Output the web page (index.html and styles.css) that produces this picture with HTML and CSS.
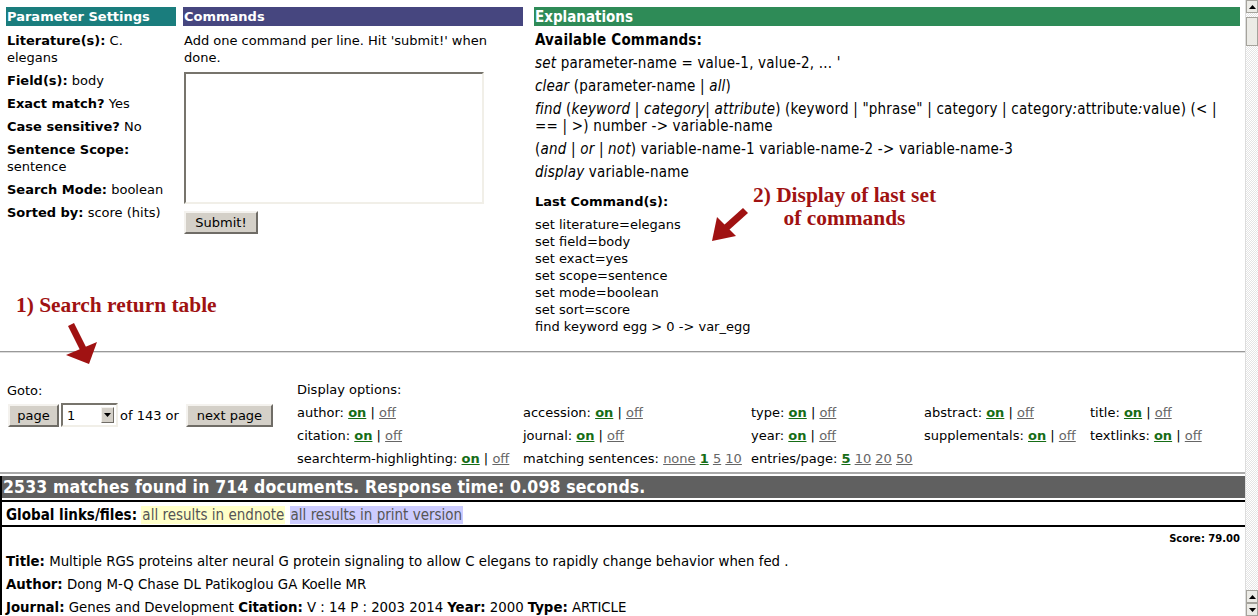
FILE: index.html
```html
<!DOCTYPE html>
<html>
<head>
<meta charset="utf-8">
<link rel="stylesheet" href="styles.css">
</head>
<body>
<div class="page">
  <div class="top">
    <div class="params">
      <div class="hdr teal">Parameter Settings</div>
      <p><b>Literature(s):</b> C. elegans</p>
      <p><b>Field(s):</b> body</p>
      <p><b>Exact match?</b> Yes</p>
      <p><b>Case sensitive?</b> No</p>
      <p><b>Sentence Scope:</b> sentence</p>
      <p><b>Search Mode:</b> boolean</p>
      <p><b>Sorted by:</b> score (hits)</p>
    </div>
    <div class="cmds">
      <div class="hdr slate">Commands</div>
      <p>Add one command per line. Hit 'submit!' when done.</p>
      <textarea class="cmdbox"></textarea>
      <div class="btnrow"><button class="btn submit">Submit!</button></div>
    </div>
    <div class="expl">
      <div class="hdr green cond">Explanations</div>
      <p class="cond"><b>Available Commands:</b></p>
      <p class="cond"><i>set</i> parameter-name = value-1, value-2, ... '</p>
      <p class="cond"><i>clear</i> (parameter-name | <i>all</i>)</p>
      <p class="cond"><i>find</i> (<i>keyword</i> | <i>category</i>| <i>attribute</i>) (keyword | "phrase" | category | category<i>:</i>attribute<i>:</i>value) (&lt; |<br>== | &gt;) number -&gt; variable-name</p>
      <p class="cond">(<i>and</i> | <i>or</i> | <i>not</i>) variable-name-1 variable-name-2 -&gt; variable-name-3</p>
      <p class="cond"><i>display</i> variable-name</p>
      <p class="lasthdr"><b>Last Command(s):</b></p>
      <p class="lastcmds">set literature=elegans<br>set field=body<br>set exact=yes<br>set scope=sentence<br>set mode=boolean<br>set sort=score<br>find keyword egg &gt; 0 -&gt; var_egg</p>
    </div>
  </div>

  <hr class="rule">

  <div class="nav">
    <div class="goto">
      <div class="gotolabel">Goto:</div>
      <div class="gotorow">
        <button class="btn pagebtn">page</button>
        <div class="select"><span class="selval">1</span><span class="selarrow"><svg width="7" height="4" viewBox="0 0 7 4"><path d="M0 0h7L3.5 4z" fill="#000"/></svg></span></div>
        <span class="of">of 143 or</span>
        <button class="btn nextbtn">next page</button>
      </div>
    </div>
    <div class="opts">
      <div class="full">Display options:</div>
      <div>author: <a class="on">on</a> | <a class="off">off</a></div>
      <div>accession: <a class="on">on</a> | <a class="off">off</a></div>
      <div>type: <a class="on">on</a> | <a class="off">off</a></div>
      <div>abstract: <a class="on">on</a> | <a class="off">off</a></div>
      <div>title: <a class="on">on</a> | <a class="off">off</a></div>
      <div>citation: <a class="on">on</a> | <a class="off">off</a></div>
      <div>journal: <a class="on">on</a> | <a class="off">off</a></div>
      <div>year: <a class="on">on</a> | <a class="off">off</a></div>
      <div>supplementals: <a class="on">on</a> | <a class="off">off</a></div>
      <div>textlinks: <a class="on">on</a> | <a class="off">off</a></div>
      <div>searchterm-highlighting: <a class="on">on</a> | <a class="off">off</a></div>
      <div>matching sentences: <a class="off">none</a> <a class="on">1</a> <a class="off">5</a> <a class="off">10</a></div>
      <div class="span3">entries/page: <a class="on">5</a> <a class="off">10</a> <a class="off">20</a> <a class="off">50</a></div>
    </div>
  </div>

  <div class="results">
    <div class="matches cond">2533 matches found in 714 documents. Response time: 0.098 seconds.</div>
    <div class="global cond"><b>Global links/files:</b> <span class="endnote">all results in endnote</span> <span class="printv">all results in print version</span></div>
    <div class="entry">
      <div class="score">Score: 79.00</div>
      <p class="cond"><b>Title:</b> Multiple RGS proteins alter neural G protein signaling to allow C elegans to rapidly change behavior when fed .</p>
      <p class="cond"><b>Author:</b> Dong M-Q Chase DL Patikoglou GA Koelle MR</p>
      <p class="cond"><b>Journal:</b> Genes and Development <b>Citation:</b> V : 14 P : 2003 2014 <b>Year:</b> 2000 <b>Type:</b> ARTICLE</p>
    </div>
  </div>

  <div class="annot a1">1) Search return table</div>
  <div class="annot a2">2) Display of last set<br>of commands</div>
  <svg class="arrows" width="1246" height="616" viewBox="0 0 1246 616">
    <g fill="#a01212" stroke="none">
      <path d="M68 326 L74 323 L87 349 L81 352 Z"/>
      <path d="M66 355 L97 342 L89 364 Z"/>
      <path d="M743 208 L748 213 L729 230 L724 225 Z"/>
      <path d="M712 241 L717 217 L736 236 Z"/>
    </g>
  </svg>

  <div class="scrollbar">
    <div class="sbbtn"><svg width="7" height="4" viewBox="0 0 7 4"><path d="M0 4h7L3.5 0z" fill="#000"/></svg></div>
    <div class="sbthumb"></div>
    <div class="sbtrack"></div>
    <div class="sbbtn"><svg width="7" height="4" viewBox="0 0 7 4"><path d="M0 4h7L3.5 0z" fill="#000"/></svg></div>
    <div class="sbbtn"><svg width="7" height="4" viewBox="0 0 7 4"><path d="M0 0h7L3.5 4z" fill="#000"/></svg></div>
  </div>
</div>
</body>
</html>
```

FILE: styles.css
```css
html, body {
  margin: 0;
  padding: 0;
  background: #fff;
}
body {
  font-family: "DejaVu Sans", Verdana, sans-serif;
  font-size: 13px;
  line-height: 17px;
  color: #000;
  overflow: hidden;
}
.page {
  position: relative;
  width: 1258px;
  height: 616px;
  overflow: hidden;
}
.cond {
  font-family: "DejaVu Sans Condensed", "DejaVu Sans", sans-serif;
  font-stretch: condensed;
  font-size: 15px;
}
.expl p.cond {
  letter-spacing: 0.2px;
}
p {
  margin: 6px 0 0 0;
}
.top {
  display: flex;
  padding: 7px 0 0 6px;
  height: 330px;
}
.params {
  width: 170px;
  margin-right: 7px;
}
.cmds {
  width: 340px;
  margin-right: 11px;
}
.expl {
  width: 706px;
}
.hdr {
  height: 19px;
  line-height: 19px;
  color: #fff;
  font-weight: bold;
  padding-left: 1px;
}
.hdr.cond {
  line-height: 21px;
}
.teal { background: #1a7d7d; }
.slate { background: #46467f; }
.green { background: #2e8b57; }
.params p, .cmds p, .expl p {
  padding-left: 1px;
}
.cmdbox {
  display: block;
  box-sizing: border-box;
  width: 300px;
  height: 132px;
  margin: 6px 0 0 1px;
  border: 2px solid;
  border-color: #77746c #f1efe8 #f1efe8 #77746c;
  resize: none;
  background: #fff;
}
.btnrow {
  margin-top: 7px;
  padding-left: 1px;
}
.btn {
  font-family: "DejaVu Sans", Verdana, sans-serif;
  font-size: 13px;
  background: #d4d0c8;
  border: 2px solid;
  border-color: #f4f2ee #6f6c66 #6f6c66 #f4f2ee;
  padding: 0;
  height: 23px;
  color: #000;
}
.submit { width: 74px; }
.lasthdr {
  margin-top: 12px !important;
}
.rule {
  margin: 14px 0 0 0;
  border: 0;
  border-top: 1px solid #999;
  border-bottom: 1px solid #ddd;
  height: 0;
  width: 1246px;
}
.nav {
  display: flex;
  height: 121px;
  border-bottom: 2px solid #aaa;
  width: 1246px;
  box-sizing: border-box;
}
.goto {
  width: 290px;
  padding: 29px 0 0 7px;
}
.gotorow {
  display: flex;
  align-items: center;
  margin-top: 4px;
}
.pagebtn { width: 51px; margin-left: 1px; }
.select {
  display: flex;
  box-sizing: border-box;
  width: 57px;
  height: 24px;
  margin-left: 2px;
  border: 2px solid;
  border-color: #77746c #f1efe8 #f1efe8 #77746c;
  background: #fff;
  align-items: center;
}
.selval { flex: 1; padding-left: 4px; }
.selarrow {
  width: 11px;
  height: 14px;
  margin-right: 2px;
  background: #d4d0c8;
  border: 1px solid;
  border-color: #f4f2ee #6f6c66 #6f6c66 #f4f2ee;
  display: flex;
  align-items: center;
  justify-content: center;
}
.of { margin-left: 2px; margin-right: 7px; }
.nextbtn { width: 87px; }
.opts {
  display: grid;
  grid-template-columns: 226px 228px 173px 166px auto;
  grid-auto-rows: 23px;
  align-items: center;
  margin-top: 25px;
  white-space: nowrap;
}
.opts .full { grid-column: 1 / -1; }
.opts .span3 { grid-column: 3 / -1; }
a.on {
  color: #166d16;
  font-weight: bold;
  text-decoration: underline;
}
a.off {
  color: #666;
  text-decoration: underline;
}
.results {
  width: 1246px;
  border-left: 2px solid #000;
  box-sizing: border-box;
}
.matches {
  background: #606060;
  color: #fff;
  font-weight: bold;
  font-size: 17.5px;
  letter-spacing: 0.15px;
  height: 22px;
  line-height: 22px;
  padding-left: 1px;
  margin-top: 2px;
}
.global {
  border-top: 2px solid #000;
  border-bottom: 2px solid #000;
  height: 21px;
  padding-top: 2px;
  line-height: 23px;
  padding-left: 4px;
  margin-top: 2px;
}
.endnote { background: #ffffc8; color: #555; padding: 0 1px; }
.printv { background: #ccccff; color: #555; padding: 0 1px; }
.entry {
  padding: 0 6px 0 4px;
}
.entry p {
  margin-top: 6px;
  font-size: 14.8px;
}
.score {
  text-align: right;
  font-size: 10px;
  font-weight: bold;
  margin-top: 5px;
  line-height: 14px;
}
.annot {
  position: absolute;
  font-family: "Liberation Serif", "Times New Roman", serif;
  font-weight: bold;
  font-size: 21.4px;
  line-height: 23px;
  color: #a01212;
}
.a1 { left: 16px; top: 294px; }
.a2 { left: 753px; top: 184px; text-align: center; }
.arrows {
  position: absolute;
  left: 0;
  top: 0;
  pointer-events: none;
}
.scrollbar {
  position: absolute;
  top: 0;
  right: 0;
  width: 12px;
  height: 616px;
  display: flex;
  flex-direction: column;
  background-color: #fff;
  background-image: repeating-conic-gradient(#e4e4e4 0 25%, #fff 0 50%);
  background-size: 2px 2px;
  border-left: 1px solid #ddd;
}
.sbbtn {
  height: 13px;
  background: #ecebe6;
  border: 1px solid #a5a39c;
  box-sizing: border-box;
  display: flex;
  align-items: center;
  justify-content: center;
}
.sbthumb {
  margin-top: 4px;
  height: 29px;
  background: #ecebe6;
  border: 1px solid #a5a39c;
  box-sizing: border-box;
}
.sbtrack { flex: 1; }
```
